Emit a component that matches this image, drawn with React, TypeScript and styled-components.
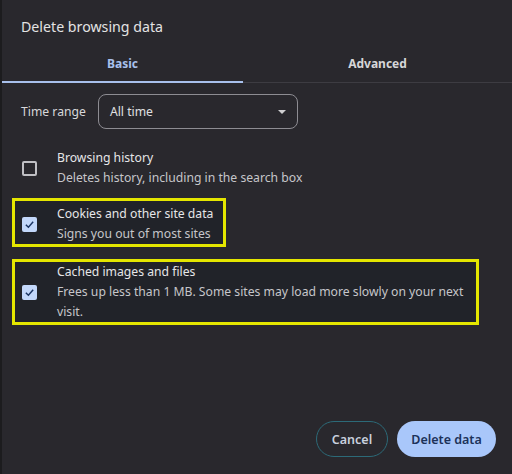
import React from "react";
import styled, { createGlobalStyle } from "styled-components";

const Global = createGlobalStyle`
  html, body { margin: 0; padding: 0; background: #29282d; }
  body { font-family: "Noto Sans", "Open Sans", sans-serif; }
  * { box-sizing: border-box; }
`;

const Dialog = styled.div`
  width: 512px;
  height: 474px;
  background: #29282d;
  border-left: 2px solid #1c1c1e;
  display: flex;
  flex-direction: column;
  color: #e3e3e3;
`;

const Title = styled.h1`
  margin: 0;
  padding: 17px 0 0 19px;
  font-size: 14.2px;
  font-weight: 400;
  line-height: 20px;
  color: #e3e3e3;
`;

const Tabs = styled.div`
  margin-top: 8px;
  display: grid;
  grid-template-columns: 241px 1fr;
  border-bottom: 1px solid #3d3c42;
`;

const Tab = styled.div<{ $active?: boolean }>`
  height: 38px;
  display: flex;
  align-items: center;
  justify-content: center;
  font-size: 12px;
  font-weight: 700;
  color: ${(p) => (p.$active ? "#a8c0ec" : "#d6d6d8")};
  box-shadow: ${(p) => (p.$active ? "inset 0 -2px 0 #a8c0ec" : "none")};
  margin-bottom: -1px;
  padding-bottom: 2px;
`;

const RangeRow = styled.div`
  display: flex;
  align-items: center;
  gap: 12px;
  padding: 11px 0 0 19px;
`;

const Label = styled.span`
  font-size: 12.2px;
  color: #d8d8da;
`;

const Select = styled.div`
  width: 200px;
  height: 35px;
  border: 1px solid #8d8c92;
  border-radius: 8px;
  display: flex;
  align-items: center;
  justify-content: space-between;
  padding: 0 11px 0 11px;
  font-size: 12.2px;
  color: #e0e0e2;
`;

const Caret = styled.span`
  width: 0;
  height: 0;
  border-left: 4px solid transparent;
  border-right: 4px solid transparent;
  border-top: 4px solid #d0d0d2;
`;

const List = styled.div`
  display: flex;
  flex-direction: column;
  gap: 7px;
  padding: 16px 0 0 10px;
`;

const Item = styled.div<{ $hl?: boolean; $w?: string; $pt?: number; $mt?: number }>`
  display: flex;
  align-items: center;
  gap: 20px;
  width: ${(p) => p.$w || "auto"};
  align-self: flex-start;
  margin-top: ${(p) => p.$mt || 0}px;
  padding: ${(p) => p.$pt || 0}px 10px 0 7px;
  border: 3px solid ${(p) => (p.$hl ? "#e4e600" : "transparent")};
  background: ${(p) => (p.$hl ? "#212329" : "transparent")};
`;

const Box = styled.span<{ $checked?: boolean }>`
  flex: none;
  width: 15px;
  height: 15px;
  border-radius: 2px;
  display: flex;
  align-items: center;
  justify-content: center;
  border: ${(p) => (p.$checked ? "none" : "2px solid #c0c0c4")};
  background: ${(p) => (p.$checked ? "#c3d8fb" : "transparent")};
`;

const Text = styled.div`
  display: flex;
  flex-direction: column;
  font-size: 12.2px;
  line-height: 20px;
`;

const ItemTitle = styled.span`
  color: #e6e6e8;
`;

const ItemSub = styled.span`
  color: #c6c6ca;
`;

const Footer = styled.div`
  margin-top: auto;
  display: flex;
  justify-content: flex-end;
  gap: 9px;
  padding: 0 16px 17px 0;
`;

const Button = styled.button<{ $primary?: boolean }>`
  height: 36px;
  width: ${(p) => (p.$primary ? "99px" : "72px")};
  border-radius: 18px;
  font-family: inherit;
  font-size: 12.5px;
  font-weight: 600;
  padding: 0;
  border: ${(p) => (p.$primary ? "none" : "1px solid #2c6a78")};
  background: ${(p) => (p.$primary ? "#a9c7fa" : "transparent")};
  color: ${(p) => (p.$primary ? "#1c3259" : "#c8d0de")};
`;

const Check = () => (
  <svg width="11" height="11" viewBox="0 0 12 12">
    <path d="M2 6.3 L4.8 9 L10 3" fill="none" stroke="#1b3563" strokeWidth="1.6" />
  </svg>
);

export default function App() {
  return (
    <>
      <Global />
      <Dialog>
        <Title>Delete browsing data</Title>
        <Tabs>
          <Tab $active>Basic</Tab>
          <Tab>Advanced</Tab>
        </Tabs>
        <RangeRow>
          <Label>Time range</Label>
          <Select>
            All time
            <Caret />
          </Select>
        </RangeRow>
        <List>
          <Item>
            <Box />
            <Text>
              <ItemTitle>Browsing history</ItemTitle>
              <ItemSub>Deletes history, including in the search box</ItemSub>
            </Text>
          </Item>
          <Item $hl $pt={3}>
            <Box $checked>
              <Check />
            </Box>
            <Text>
              <ItemTitle>Cookies and other site data</ItemTitle>
              <ItemSub>Signs you out of most sites</ItemSub>
            </Text>
          </Item>
          <Item $hl $w="467px" $mt={5}>
            <Box $checked>
              <Check />
            </Box>
            <Text>
              <ItemTitle>Cached images and files</ItemTitle>
              <ItemSub>
                Frees up less than 1 MB. Some sites may load more slowly on your next visit.
              </ItemSub>
            </Text>
          </Item>
        </List>
        <Footer>
          <Button>Cancel</Button>
          <Button $primary>Delete data</Button>
        </Footer>
      </Dialog>
    </>
  );
}
